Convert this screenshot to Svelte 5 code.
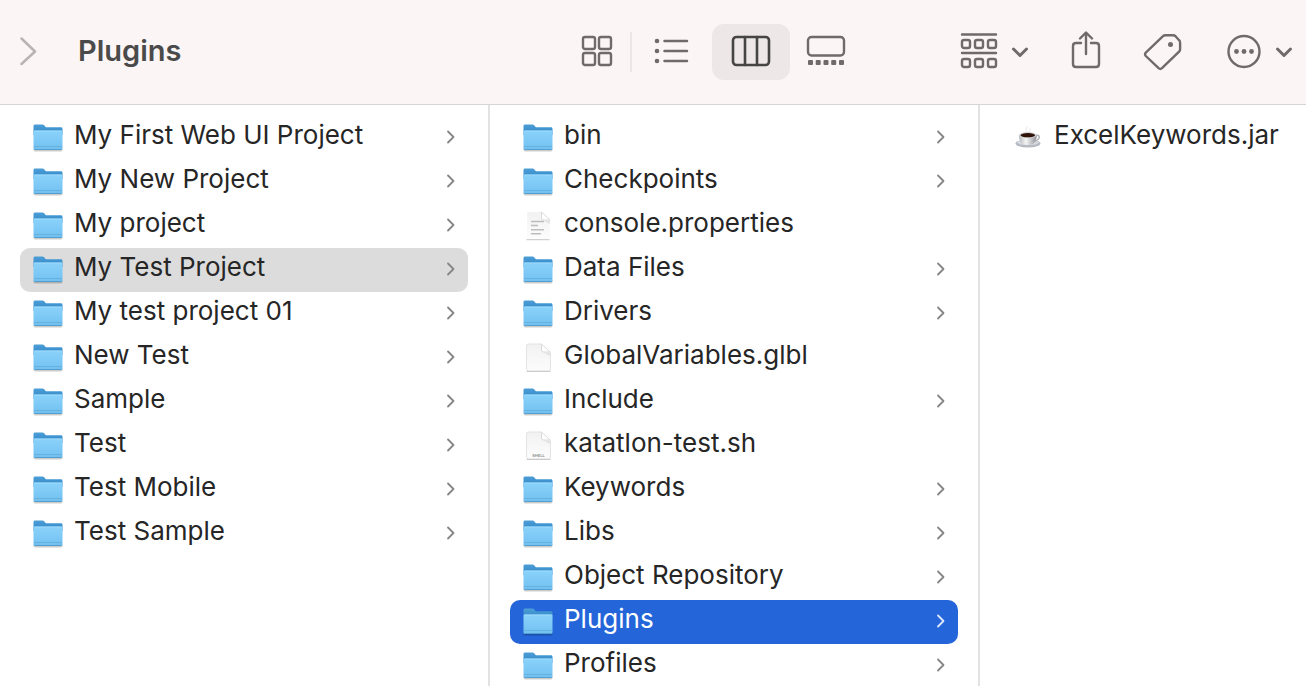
<script>
  const projects = [
    'My First Web UI Project', 'My New Project', 'My project', 'My Test Project',
    'My test project 01', 'New Test', 'Sample', 'Test', 'Test Mobile', 'Test Sample'
  ].map((name) => ({ name, kind: 'folder' }));

  const contents = [
    { name: 'bin', kind: 'folder' },
    { name: 'Checkpoints', kind: 'folder' },
    { name: 'console.properties', kind: 'text' },
    { name: 'Data Files', kind: 'folder' },
    { name: 'Drivers', kind: 'folder' },
    { name: 'GlobalVariables.glbl', kind: 'blank' },
    { name: 'Include', kind: 'folder' },
    { name: 'katatlon-test.sh', kind: 'shell' },
    { name: 'Keywords', kind: 'folder' },
    { name: 'Libs', kind: 'folder' },
    { name: 'Object Repository', kind: 'folder' },
    { name: 'Plugins', kind: 'folder' },
    { name: 'Profiles', kind: 'folder' }
  ];

  const columns = [
    { label: 'Projects', items: projects, selected: 'My Test Project', tone: 'muted' },
    { label: 'My Test Project', items: contents, selected: 'Plugins', tone: 'active' },
    { label: 'Plugins', items: [{ name: 'ExcelKeywords.jar', kind: 'jar' }], selected: '', tone: '' }
  ];
</script>

<svg class="defs" width="0" height="0" aria-hidden="true">
  <defs>
    <linearGradient id="folder-front" x1="0" y1="0" x2="0" y2="1">
      <stop offset="0" stop-color="#8ad2fb" />
      <stop offset="1" stop-color="#72c0f0" />
    </linearGradient>
    <linearGradient id="folder-back" x1="0" y1="0" x2="0" y2="1">
      <stop offset="0" stop-color="#4d9ed6" />
      <stop offset="1" stop-color="#2e84c6" />
    </linearGradient>
    <linearGradient id="paper" x1="0" y1="0" x2="0" y2="1">
      <stop offset="0" stop-color="#f2f2f2" />
      <stop offset="1" stop-color="#fcfcfc" />
    </linearGradient>
    <linearGradient id="cup" x1="0" y1="0" x2="1" y2="0">
      <stop offset="0" stop-color="#b4b6ba" />
      <stop offset="0.4" stop-color="#f6f6f6" />
      <stop offset="1" stop-color="#8e9197" />
    </linearGradient>
  </defs>
</svg>

{#snippet icon(kind)}
  <svg class="icon" width="32" height="32" viewBox="0 0 32 32" aria-hidden="true">
    {#if kind === 'folder'}
      <path d="M1.500 27h29v1.800q0 1.700-1.500 1.700H3q-1.500 0-1.500-1.700z" fill="#000" opacity=".2" />
      <path d="M1.500 5.400c0-1.200.6-1.800 1.600-1.800h6.800c1.200 0 1.700.3 2.500 1l.8.8c.6.6 1.200.8 2.200.8h13.500c1 0 1.600.6 1.600 1.600V14h-29z" fill="url(#folder-back)" />
      <path d="M1.500 10.800c0-.9.5-1.400 1.400-1.400h26.200c.9 0 1.400.5 1.400 1.400v16.700c0 .9-.5 1.400-1.400 1.400H2.900c-.9 0-1.400-.5-1.400-1.400z" fill="url(#folder-front)" />
      <path d="M2.500 10h27" stroke="#a5ddfb" stroke-width=".8" />
      <path d="M2 25.500h28" stroke="#5fadd9" stroke-width=".8" />
      <path d="M2.500 28.500h27" stroke="#4a97c6" stroke-width=".8" />
    {:else if kind === 'jar'}
      <ellipse cx="16" cy="22.500" rx="12.500" ry="4" fill="#b4b9c0" />
      <ellipse cx="16" cy="21.500" rx="11" ry="2.800" fill="#d4d7dc" />
      <path d="M23.500 14.500c4-.9 4.600 1.500 3 3.400-1.200 1.400-3 2.200-5 2.400" fill="none" stroke="#b0b3b9" stroke-width="1.500" />
      <path d="M6.800 14c0 6 2.900 10 9 10s9-4 9-10z" fill="url(#cup)" />
      <ellipse cx="15.800" cy="14" rx="9" ry="3" fill="#d3d4d7" />
      <ellipse cx="15.800" cy="14.200" rx="7.300" ry="2.100" fill="#30140b" />
      <path d="M14.500 11c-2-2 2-3.500 0-6M17.500 11c-1-2 2-2.500.5-4" fill="none" stroke="#ededef" stroke-width="1.200" />
    {:else}
      <path d="M5 28.500V4.500Q5 3 6.500 3h13L28 11v17q0 1.500-1.500 1.500h-20Q5 29.500 5 28.500z" fill="url(#paper)" />
      {#if kind !== 'text'}
        <path d="M19.500 3h-13Q4.500 3 4.500 5v23q0 1.800 2 1.800h20q2 0 2-1.800V11.500" fill="none" stroke="#dcdcdc" stroke-width=".8" />
        <path d="M4.500 30.500h24" stroke="#c6c6c6" stroke-width=".9" />
      {:else}
        <path d="M4.500 30.700h23" stroke="#c4c4c4" stroke-width="1" />
      {/if}
      <path d="M19.500 3v6q0 2 2 2H28z" fill="#fff" stroke="#d2d2d2" stroke-width=".8" />
      <path d="M21 11.500h7v3.500z" fill="#e4e4e4" />
      {#if kind === 'text'}
        <path d="M9 12.500h13M9 16.500h7M9 20.700h13M9 24.800h10" stroke="#bdbdbd" stroke-width="1.500" />
      {:else if kind === 'shell'}
        <text x="16.500" y="27.500" text-anchor="middle" class="badge">SHELL</text>
      {/if}
    {/if}
  </svg>
{/snippet}

{#snippet chevronDown()}
  <svg width="18" height="42" viewBox="0 0 18 42" aria-hidden="true">
    <path d="M2.500 18 9 24.500 15.500 18" stroke-width="3" />
  </svg>
{/snippet}

<main class="window">
  <header class="toolbar">
    <button class="tool forward" aria-label="Forward">
      <svg width="18" height="42" viewBox="0 0 18 42" aria-hidden="true">
        <path d="M1.500 7.500 15 20.500 1.500 33" stroke-width="2.500" />
      </svg>
    </button>
    <h1>Plugins</h1>

    <div class="views" role="group" aria-label="View">
      <button class="tool view" aria-label="Icons">
        <svg width="32" height="42" viewBox="0 0 32 42" aria-hidden="true">
          <rect x="2" y="6" width="12" height="12" rx="2" />
          <rect x="18" y="6" width="12" height="12" rx="2" />
          <rect x="2" y="22" width="12" height="12" rx="2" />
          <rect x="18" y="22" width="12" height="12" rx="2" />
        </svg>
      </button>
      <span class="rule"></span>
      <button class="tool view list" aria-label="List">
        <svg width="36" height="42" viewBox="0 0 36 42" aria-hidden="true">
          <g class="solid">
            <circle cx="3" cy="10" r="2.300" /><circle cx="3" cy="20" r="2.300" /><circle cx="3" cy="30" r="2.300" />
          </g>
          <path d="M10.500 10h22.500M10.500 20h22.500M10.500 30h22.500" stroke-width="2.500" />
        </svg>
      </button>
      <button class="tool view current" aria-label="Columns" aria-pressed="true">
        <svg width="40" height="42" viewBox="0 0 40 42" aria-hidden="true">
          <rect x="2" y="6" width="36" height="28" rx="3.500" stroke-width="2.600" />
          <path d="M14 6v28M26 6v28" stroke-width="2.600" />
        </svg>
      </button>
      <button class="tool view" aria-label="Gallery">
        <svg width="40" height="42" viewBox="0 0 40 42" aria-hidden="true">
          <rect x="2" y="6" width="36" height="18.500" rx="3.500" />
          <g class="solid">
            <rect x="2" y="29" width="5" height="5" rx="1" /><rect x="9.700" y="29" width="5" height="5" rx="1" />
            <rect x="17.500" y="29" width="5" height="5" rx="1" /><rect x="25.200" y="29" width="5" height="5" rx="1" />
            <rect x="33" y="29" width="5" height="5" rx="1" />
          </g>
        </svg>
      </button>
    </div>

    <div class="actions">
      <button class="tool menu" aria-label="Group items">
        <svg width="38" height="42" viewBox="0 0 38 42" aria-hidden="true">
          <path d="M2 3.500h34M2 22h34" />
          {#each [9, 28] as y}
            {#each [2, 15, 28] as x}
              <rect {x} {y} width="8" height="8" rx="2" />
            {/each}
          {/each}
        </svg>
        {@render chevronDown()}
      </button>
      <button class="tool" aria-label="Share">
        <svg width="32" height="42" viewBox="0 0 32 42" aria-hidden="true">
          <path d="M11 12H6q-3 0-3 3v18q0 3 3 3h20q3 0 3-3V15q0-3-3-3h-5" />
          <path d="M16 23V2M10 7.500 16 1.500l6 6" />
        </svg>
      </button>
      <button class="tool" aria-label="Edit tags">
        <svg width="42" height="42" viewBox="0 0 42 42" aria-hidden="true">
          <path d="M20 5.200q1-1 2.500-1H30q1.500 0 2.500 1l3.600 4q1 1 1 2.500v6.500q0 1.500-1 2.500L19 37.200q-1.700 1.500-3.400 0L2.800 25q-1.500-1.700 0-3.400z" />
          <circle class="solid" cx="27.500" cy="13.500" r="2.500" />
        </svg>
      </button>
      <button class="tool menu" aria-label="More actions">
        <svg width="36" height="42" viewBox="0 0 36 42" aria-hidden="true">
          <circle cx="18" cy="20.500" r="15.500" />
          <g class="solid">
            <circle cx="10.500" cy="20.500" r="2.400" /><circle cx="18" cy="20.500" r="2.400" /><circle cx="25.500" cy="20.500" r="2.400" />
          </g>
        </svg>
        {@render chevronDown()}
      </button>
    </div>
  </header>

  <div class="browser">
    {#each columns as column}
      <ul class="column" aria-label={column.label}>
        {#each column.items as item}
          <li>
            <button class="row {item.name === column.selected ? column.tone : ''}">
              {@render icon(item.kind)}
              <span class="name">{item.name}</span>
              {#if item.kind === 'folder'}
                <svg class="arrow" width="10" height="16" viewBox="0 0 10 16" aria-hidden="true">
                  <path d="M2 2.500l5.500 5.500L2 13.500" />
                </svg>
              {/if}
            </button>
          </li>
        {/each}
      </ul>
    {/each}
  </div>
</main>

<style>
  :global(body) {
    margin: 0;
  }
  .window {
    display: flex;
    flex-direction: column;
    height: 100vh;
    overflow: hidden;
    background: #fff;
    color: #262626;
    font-family: Inter, "Liberation Sans", sans-serif;
  }
  .defs {
    position: absolute;
  }
  button {
    margin: 0;
    border: 0;
    padding: 0;
    background: none;
    color: inherit;
    font: inherit;
    text-align: left;
  }
  .toolbar {
    display: flex;
    align-items: center;
    flex: none;
    height: 104px;
    padding: 0 13px 0 20px;
    border-bottom: 1px solid #d8d4d4;
    background: #fbf5f5;
  }
  h1 {
    flex: 1;
    margin: 0 0 0 40px;
    padding-bottom: 2px;
    color: #4b4a4a;
    font-size: 29px;
    font-weight: 600;
    line-height: 40px;
  }
  .tool {
    display: flex;
    align-items: center;
    justify-content: center;
    color: #716a6a;
  }
  .tool svg {
    display: block;
    fill: none;
    stroke: currentColor;
    stroke-width: 2.4;
    stroke-linecap: round;
    stroke-linejoin: round;
  }
  .tool .solid {
    fill: currentColor;
    stroke: none;
  }
  .forward {
    color: #b9b3b3;
  }
  .views {
    display: flex;
    align-items: center;
    margin-right: 98px;
  }
  .view {
    width: 78px;
    height: 56px;
    border-radius: 12px;
  }
  .view:first-child {
    width: 66px;
  }
  .view:last-child {
    width: 72px;
  }
  .view.list {
    width: 80px;
  }
  .current {
    background: #ede7e7;
    color: #474444;
  }
  .rule {
    width: 2px;
    height: 40px;
    background: #ece6e6;
  }
  .actions {
    display: flex;
    align-items: center;
    gap: 41px;
  }
  .menu {
    gap: 13px;
  }
  .browser {
    display: grid;
    grid-template-columns: 490px 490px 1fr;
    flex: 1;
    min-height: 0;
  }
  .column {
    box-sizing: border-box;
    min-width: 0;
    margin: 0;
    border-right: 2px solid #e2e2e2;
    padding: 11px 20px 0;
    overflow: hidden;
    list-style: none;
  }
  .column:last-child {
    border-right: 0;
  }
  .row {
    display: flex;
    align-items: center;
    box-sizing: border-box;
    width: 100%;
    height: 44px;
    border-radius: 10px;
    padding: 0 12px 2px;
    color: #262626;
  }
  .icon {
    flex: none;
  }
  .name {
    flex: 1;
    margin-left: 10px;
    padding-bottom: 4px;
    font-size: 26px;
    line-height: 32px;
    white-space: nowrap;
  }
  .badge {
    fill: #8e8e8e;
    font-size: 4px;
    font-weight: 600;
  }
  .arrow {
    flex: none;
    fill: none;
    stroke: #858585;
    stroke-width: 1.8;
    stroke-linecap: round;
    stroke-linejoin: round;
  }
  .muted {
    background: #dcdcdc;
  }
  .active {
    background: #2465d9;
    color: #fff;
  }
  .active .arrow {
    stroke: #dfe9fb;
  }
</style>
